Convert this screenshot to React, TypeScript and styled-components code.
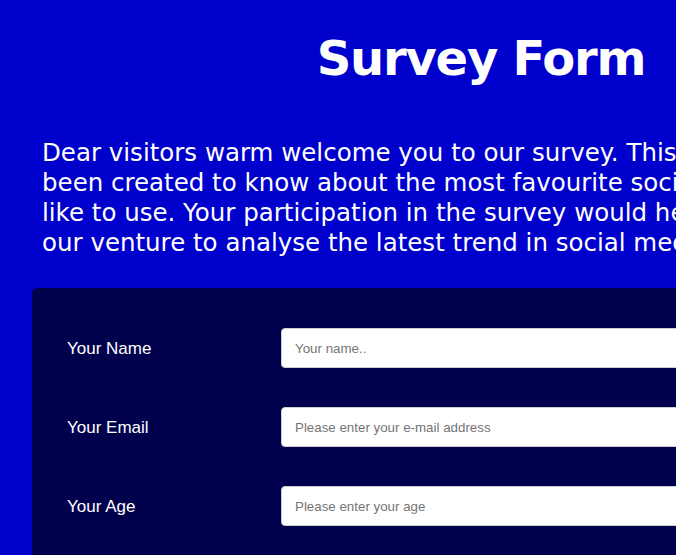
import { createGlobalStyle, styled } from "styled-components";

const GlobalStyle = createGlobalStyle`
  html, body {
    margin: 0;
    padding: 0;
    background-color: #0000cc;
    overflow: hidden;
  }
`;

const Page = styled.div`
  width: 962px;
  padding-top: 30px;
  color: #ffffff;
  font-family: "DejaVu Sans", Verdana, sans-serif;
`;

const Title = styled.h1`
  margin: 0;
  font-size: 48px;
  font-weight: bold;
  letter-spacing: -1.2px;
  text-align: center;
`;

const Intro = styled.p`
  margin: 52px 0 0 42px;
  font-size: 24.5px;
  line-height: 30px;
  white-space: nowrap;
`;

const FormPanel = styled.form`
  margin: 30px 0 0 32px;
  padding: 40px 0 40px 35px;
  background-color: #00004c;
  border-radius: 5px;
  display: flex;
  flex-direction: column;
  gap: 39px;
`;

const Row = styled.div`
  display: grid;
  grid-template-columns: 214px 1fr;
  align-items: center;
`;

const Label = styled.label`
  padding-top: 1px;
  font-family: "Liberation Sans", Arial, sans-serif;
  font-size: 17px;
  color: #ffffff;
`;

const Input = styled.input`
  box-sizing: border-box;
  height: 40px;
  width: 100%;
  padding: 0 13px;
  border: 1px solid #cfcfcf;
  border-radius: 4px;
  background: #ffffff;
  font-family: "Liberation Sans", Arial, sans-serif;
  font-size: 13.33px;
  color: #333;
  outline: none;

  &::placeholder {
    color: #757575;
  }
`;

const fields = [
  { id: "name", label: "Your Name", type: "text", placeholder: "Your name.." },
  { id: "email", label: "Your Email", type: "email", placeholder: "Please enter your e-mail address" },
  { id: "age", label: "Your Age", type: "number", placeholder: "Please enter your age" },
  { id: "city", label: "Your City", type: "text", placeholder: "Please enter your city" },
];

export default function App() {
  return (
    <>
      <GlobalStyle />
      <Page>
        <Title>Survey Form</Title>
        <Intro>
          Dear visitors warm welcome you to our survey. This survey has
          <br />
          been created to know about the most favourite social media you
          <br />
          like to use. Your participation in the survey would help a lot
          <br />
          our venture to analyse the latest trend in social media.
        </Intro>
        <FormPanel onSubmit={(e) => e.preventDefault()}>
          {fields.map((f) => (
            <Row key={f.id}>
              <Label htmlFor={f.id}>{f.label}</Label>
              <Input id={f.id} type={f.type} placeholder={f.placeholder} />
            </Row>
          ))}
        </FormPanel>
      </Page>
    </>
  );
}
